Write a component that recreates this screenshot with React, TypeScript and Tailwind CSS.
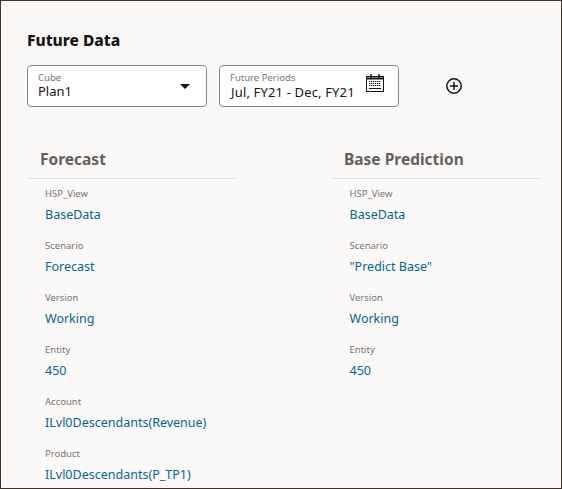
const forecast = [
  ["HSP_View", "BaseData"],
  ["Scenario", "Forecast"],
  ["Version", "Working"],
  ["Entity", "450"],
  ["Account", "ILvl0Descendants(Revenue)"],
  ["Product", "ILvl0Descendants(P_TP1)"],
];

const basePrediction = [
  ["HSP_View", "BaseData"],
  ["Scenario", '"Predict Base"'],
  ["Version", "Working"],
  ["Entity", "450"],
];

function CalendarIcon() {
  return (
    <svg width="18" height="18" viewBox="0 0 18 18" fill="none" stroke="#161513">
      <rect x="0.5" y="2.5" width="17" height="15" strokeWidth="1" />
      <path d="M1 4.5h16" strokeWidth="2" />
      <path d="M5 0v4M13 0v4" strokeWidth="1.5" />
      <path d="M3 7.5h12M3 9.5h12M3 11.5h12" strokeWidth="1.2" strokeDasharray="1.3 0.7" />
      <path d="M3 14.5h12" strokeWidth="1" />
    </svg>
  );
}

function PlusCircleIcon() {
  return (
    <svg width="18" height="18" viewBox="0 0 18 18" fill="none" stroke="#161513" strokeWidth="1.5">
      <circle cx="9" cy="9" r="7.2" />
      <path d="M9 5v8M5 9h8" />
    </svg>
  );
}

function Column({ title, rows, titleClass, bodyClass }: { title: string; rows: string[][]; titleClass: string; bodyClass: string }) {
  return (
    <div className="w-[210px]">
      <h2 className={`h-[40px] pt-[10px] text-[15.5px] leading-[20px] font-bold text-[#665f5b] border-b border-[#e4e1dd] ${titleClass}`}>
        {title}
      </h2>
      <div className={bodyClass}>
        {rows.map(([label, value]) => (
          <div key={label} className="h-[52px] pt-[8px]">
            <div className="text-[9.5px] leading-[14px] text-[#7a746f]">{label}</div>
            <div className="mt-[5px] text-[12.5px] leading-[18px] text-[#00688c]">{value}</div>
          </div>
        ))}
      </div>
    </div>
  );
}

export default function App() {
  return (
    <div
      className="h-[489px] w-[562px] overflow-hidden border border-[#4b2e2b] bg-[#fbf9f8] pl-[26px] pt-[29px]"
      style={{ fontFamily: '"Noto Sans", sans-serif' }}
    >
      <h1 className="text-[15.5px] leading-[20px] font-extrabold text-[#161513]">Future Data</h1>

      <div className="mt-[15px] flex items-center">
        <div className="flex h-[42px] w-[180px] items-center justify-between rounded-[4px] border border-[#8b8580] bg-white pl-[10px] pr-[16px]">
          <div className="-mt-[1px]">
            <div className="text-[9.5px] leading-[11px] text-[#7a746f]">Cube</div>
            <div className="text-[13px] leading-[16px] text-[#161513]">Plan1</div>
          </div>
          <div className="h-0 w-0 border-x-[5px] border-t-[5px] border-x-transparent border-t-[#161513]" />
        </div>

        <div className="relative ml-[12px] flex h-[42px] w-[180px] items-center rounded-[4px] border border-[#8b8580] bg-white pl-[10px]">
          <div>
            <div className="text-[9.5px] leading-[12px] text-[#7a746f]">Future Periods</div>
            <div className="pl-px text-[13px] leading-[16px] tracking-[0.15px] text-[#161513]">Jul, FY21 - Dec, FY21</div>
          </div>
          <div className="absolute right-[14px] top-[8px]">
            <CalendarIcon />
          </div>
        </div>

        <div className="ml-[46px]">
          <PlusCircleIcon />
        </div>
      </div>

      <div className="mt-[32px] flex gap-[95px]">
        <Column title="Forecast" rows={forecast} titleClass="pl-[13px]" bodyClass="pl-[18px]" />
        <Column title="Base Prediction" rows={basePrediction} titleClass="pl-[12px]" bodyClass="pl-[17.5px]" />
      </div>
    </div>
  );
}
